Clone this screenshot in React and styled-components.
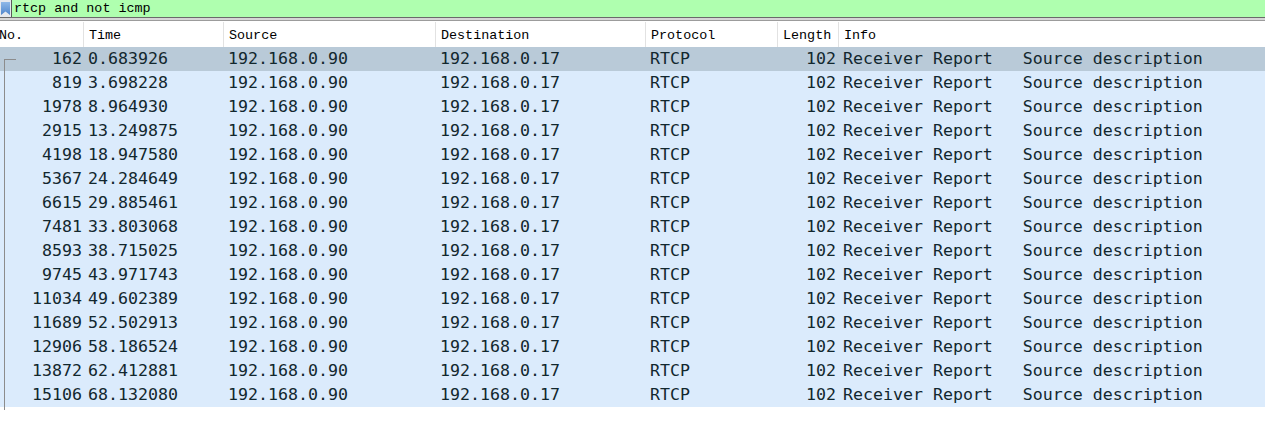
import React from 'react'
import styled, { createGlobalStyle } from 'styled-components'

const GlobalStyle = createGlobalStyle`
  html, body {
    margin: 0;
    padding: 0;
    background: #ffffff;
    overflow: hidden;
  }
`

const COLS = '90px 140px 212px 210px 132px 61px 1fr'

const Page = styled.div`
  width: 1265px;
  height: 423px;
  background: #fff;
  overflow: hidden;
`

const FilterBar = styled.div`
  display: flex;
  height: 17px;
  border-bottom: 1px solid #6a6a6a;
`

const IconBox = styled.div`
  width: 12px;
  background: #e6e9ee;
  border-right: 1px solid #5a5a5a;
  display: flex;
  align-items: flex-start;
  justify-content: center;
  padding-top: 2px;
  box-sizing: border-box;
`

const FilterInput = styled.div`
  flex: 1;
  background: #afffaf;
  font-family: "Liberation Mono", monospace;
  font-size: 13.4px;
  line-height: 17px;
  color: #000;
  padding-left: 2px;
`

const Rule = styled.div`
  height: ${props => props.$h}px;
  background: ${props => props.$c};
`

const Table = styled.div`
  position: relative;
  margin-left: -6px;
`

const HeaderRow = styled.div`
  display: grid;
  grid-template-columns: ${COLS};
  height: 26px;
  background: #fff;
`

const HeaderCell = styled.div`
  font-family: "Liberation Mono", monospace;
  font-size: 13.4px;
  line-height: 24px;
  color: #000;
  padding-left: 5px;
  padding-top: 2px;
  border-right: ${props => props.$last ? 'none' : '1px solid #e2e2e2'};
  margin-top: 1px;
  white-space: nowrap;
  overflow: hidden;
`

const Row = styled.div`
  display: grid;
  grid-template-columns: ${COLS};
  height: 24px;
  background: ${props => props.$selected ? '#b9cad8' : '#dbebfc'};
`

const Cell = styled.div`
  font-family: "DejaVu Sans Mono", monospace;
  font-size: 16.6px;
  line-height: 24px;
  color: #12272e;
  white-space: pre;
  overflow: hidden;
  text-align: ${props => props.$right ? 'right' : 'left'};
  padding-left: ${props => props.$right ? 0 : 4}px;
  padding-right: ${props => props.$pr || 0}px;
`

const TreeLine = styled.div`
  position: absolute;
  left: 10px;
  top: 38px;
  width: 11px;
  height: 350px;
  border-left: 1px solid #8c8c8c;
  border-top: 1px solid #8c8c8c;
  pointer-events: none;
`

const packets = [
  ['162', '0.683926'],
  ['819', '3.698228'],
  ['1978', '8.964930'],
  ['2915', '13.249875'],
  ['4198', '18.947580'],
  ['5367', '24.284649'],
  ['6615', '29.885461'],
  ['7481', '33.803068'],
  ['8593', '38.715025'],
  ['9745', '43.971743'],
  ['11034', '49.602389'],
  ['11689', '52.502913'],
  ['12906', '58.186524'],
  ['13872', '62.412881'],
  ['15106', '68.132080'],
]

const headers = ['No.', 'Time', 'Source', 'Destination', 'Protocol', 'Length', 'Info']

const Bookmark = () => (
  <svg width="9" height="13" viewBox="0 0 9 13">
    <defs>
      <linearGradient id="bm" x1="0" y1="0" x2="0" y2="1">
        <stop offset="0" stopColor="#8fb8e8" />
        <stop offset="1" stopColor="#4f86cc" />
      </linearGradient>
    </defs>
    <path d="M0 0 H9 V13 L4.5 9.5 L0 13 Z" fill="url(#bm)" />
  </svg>
)

const App = () => (
  <Page>
    <GlobalStyle />
    <FilterBar>
      <IconBox><Bookmark /></IconBox>
      <FilterInput>rtcp and not icmp</FilterInput>
    </FilterBar>
    <Rule $h={2} $c="#d6d6d6" />
    <Rule $h={1} $c="#9c9c9c" />
    <Table>
      <HeaderRow>
        {headers.map((h, i) => (
          <HeaderCell key={h} $last={i === headers.length - 1}>{h}</HeaderCell>
        ))}
      </HeaderRow>
      {packets.map(([no, time], i) => (
        <Row key={no} $selected={i === 0}>
          <Cell $right $pr={2}>{no}</Cell>
          <Cell>{time}</Cell>
          <Cell>192.168.0.90</Cell>
          <Cell>192.168.0.17</Cell>
          <Cell>RTCP</Cell>
          <Cell $right $pr={3}>102</Cell>
          <Cell>Receiver Report   Source description</Cell>
        </Row>
      ))}
      <TreeLine />
    </Table>
  </Page>
)

export default App
